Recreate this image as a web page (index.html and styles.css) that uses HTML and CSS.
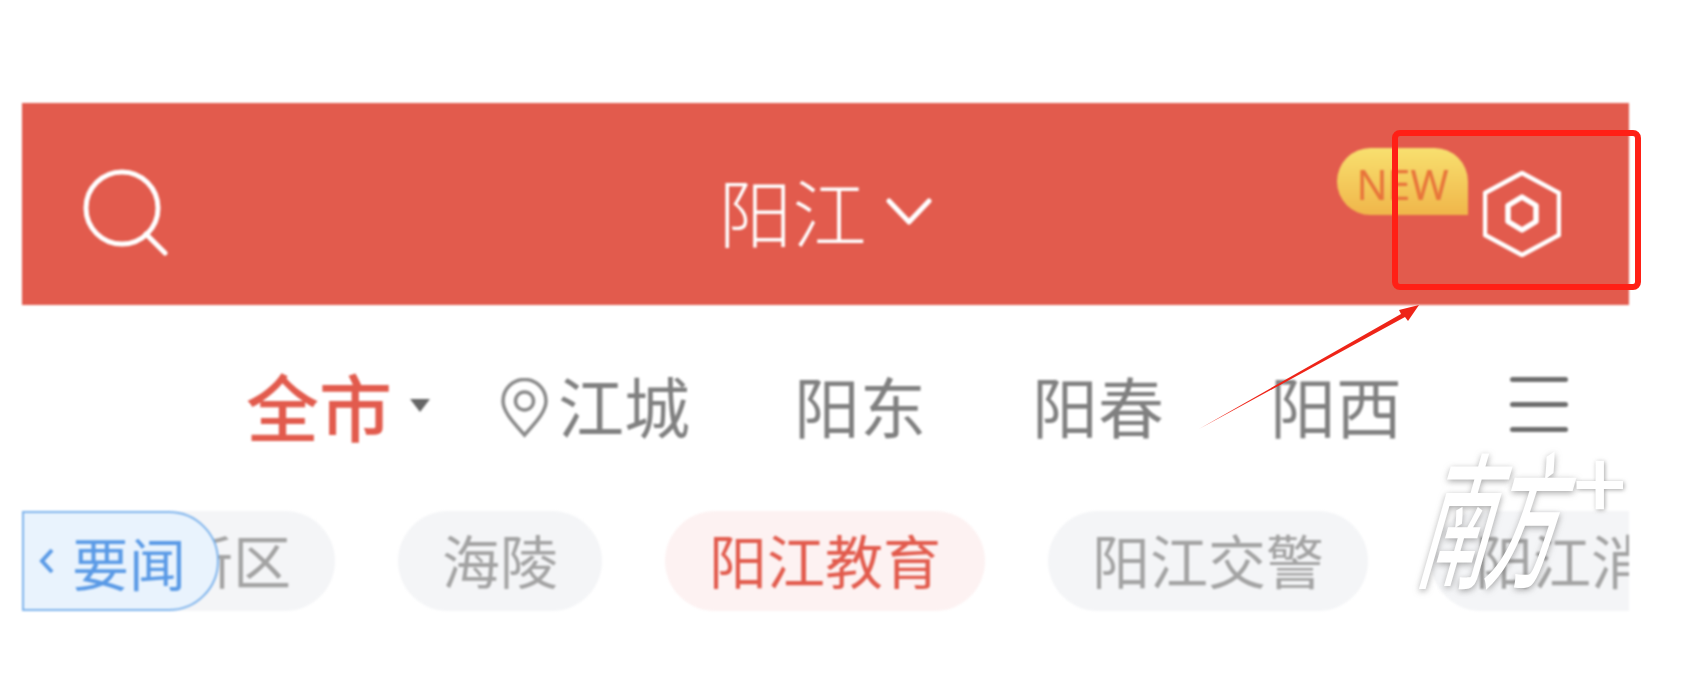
FILE: index.html
```html
<!DOCTYPE html>
<html lang="zh-CN">
<head>
<meta charset="utf-8">
<title>阳江</title>
<link rel="stylesheet" href="styles.css">
</head>
<body>
<main class="page">
  <header class="topbar">
    <svg class="search-icon" viewBox="0 0 90 96" aria-hidden="true">
      <circle cx="40" cy="48" r="36"/>
      <path d="M64 74 L83 93"/>
    </svg>
    <div class="city">阳江<svg class="city-arrow" viewBox="0 0 46 30" aria-hidden="true"><path d="M3 4 L23 25 L43 4"/></svg></div>
    <div class="tools">
      <span class="new-badge">NEW</span>
      <svg class="hex-icon" viewBox="0 0 78 86" aria-hidden="true">
        <path d="M39 2 L76 22 L76 64 L39 84 L2 64 L2 22 Z"/>
        <path class="hex-inner" d="M39 26 L53 34.500 L53 50.500 L39 59 L25 50.500 L25 34.500 Z"/>
      </svg>
    </div>
  </header>

  <nav class="areas">
    <span class="area area-current">全市</span>
    <span class="caret"></span>
    <svg class="pin-icon" viewBox="0 0 49 60" aria-hidden="true">
      <path d="M24.500 57 C14 45 3 34 3 23 A21.500 21.500 0 0 1 46 23 C46 34 35 45 24.500 57 Z"/>
      <circle cx="24.500" cy="23" r="9"/>
    </svg>
    <span class="area area-pinned">江城</span>
    <span class="area">阳东</span>
    <span class="area">阳春</span>
    <span class="area">阳西</span>
    <span class="menu"><i></i><i></i><i></i></span>
  </nav>

  <div class="chips">
    <span class="chip chip-first">新区</span>
    <span class="chip">海陵</span>
    <span class="chip chip-active">阳江教育</span>
    <span class="chip">阳江交警</span>
    <span class="chip">阳江消防</span>
    <span class="back-tab"><svg class="back-arrow" viewBox="0 0 16 28" aria-hidden="true"><path d="M13 3 L3 14 L13 25"/></svg>要闻</span>
  </div>
</main>

<div class="watermark"><span class="wm-text">南方</span><span class="wm-plus">+</span></div>

<div class="callout"></div>
<svg class="arrow" viewBox="0 0 1705 675" aria-hidden="true">
  <path d="M1199 429 L1401 314 L1399 310 L1419 305 L1408 321 L1405 317 Z"/>
</svg>
</body>
</html>
```
FILE: styles.css
```css
* {
  box-sizing: border-box;
}

html,
body {
  margin: 0;
  height: 675px;
  overflow: hidden;
  background: #fff;
}

body {
  position: relative;
  font-family: "Noto Sans CJK SC", "Noto Sans", sans-serif;
}

.page {
  width: 1607px;
  margin: 103px 0 0 22px;
  filter: blur(0.9px);
}

/* top bar */
.topbar {
  display: grid;
  grid-template-columns: 1fr auto 1fr;
  align-items: center;
  height: 202px;
  padding: 0 68px 0 60px;
  background: #e25b4d;
  color: #fff;
}

.search-icon {
  width: 90px;
  height: 96px;
  margin-top: 8px;
  fill: none;
  stroke: #fff;
  stroke-width: 5;
  stroke-linecap: round;
}

.city {
  display: flex;
  align-items: center;
  gap: 19px;
  margin-top: 12px;
  padding-left: 7px;
  font-size: 74px;
  font-weight: 300;
  line-height: 1;
}

.city-arrow {
  width: 46px;
  height: 30px;
  margin-top: 4px;
  fill: none;
  stroke: #fff;
  stroke-width: 5;
  stroke-linecap: round;
  stroke-linejoin: round;
}

.tools {
  display: flex;
  align-items: flex-start;
  justify-content: flex-end;
  gap: 15px;
  align-self: start;
  padding-top: 45px;
}

.new-badge {
  width: 131px;
  height: 67px;
  padding-top: 4px;
  border-radius: 34px 34px 0 34px;
  background: linear-gradient(#f8e06f, #f0b64a);
  color: #e8743a;
  font-family: "Noto Sans", sans-serif;
  font-size: 41px;
  line-height: 64px;
  text-align: center;
}

.hex-icon {
  width: 78px;
  height: 86px;
  margin-top: 23px;
  fill: none;
  stroke: #fff;
  stroke-width: 4.500;
  stroke-linejoin: round;
}

.hex-inner {
  stroke-width: 5.500;
}

/* area tabs */
.areas {
  display: flex;
  align-items: center;
  height: 206px;
  padding-left: 224px;
  padding-bottom: 8px;
  color: #808080;
  font-size: 66px;
  line-height: 1;
}

.area {
  margin-right: 106px;
}

.area-pinned {
  margin-right: 104px;
}

.area-current {
  margin-right: 18px;
  color: #e25b4d;
  font-size: 73px;
  font-weight: 500;
}

.caret {
  width: 0;
  height: 0;
  margin-top: 2px;
  border-left: 10px solid transparent;
  border-right: 10px solid transparent;
  border-top: 13px solid #666;
}

.pin-icon {
  width: 49px;
  height: 60px;
  margin: 8px 9px 0 70px;
  fill: none;
  stroke: #8a8a8a;
  stroke-width: 3.500;
}

.menu {
  display: flex;
  flex-direction: column;
  gap: 20px;
  width: 58px;
  margin-left: 2px;
}

.menu i {
  height: 5px;
  border-radius: 3px;
  background: #6e6e6e;
}

/* chips */
.chips {
  position: relative;
  display: flex;
  gap: 63px;
  height: 100px;
  overflow: hidden;
}

.chip {
  flex: none;
  height: 100px;
  padding: 0 44px;
  border-radius: 50px;
  background: #f4f5f7;
  color: #a3a3a3;
  font-size: 58px;
  line-height: 96px;
}

.chip-first {
  margin-left: 109px;
}

.chip-active {
  background: #fdf2f2;
  color: #e25b4d;
}

.back-tab {
  position: absolute;
  top: 0;
  left: 0;
  display: flex;
  align-items: center;
  gap: 17px;
  width: 197px;
  height: 100px;
  padding-left: 15px;
  border: 2px solid #7db3ec;
  border-radius: 0 50px 50px 0;
  background: #e9f3fd;
  color: #5a9ae6;
  font-size: 57px;
  line-height: 1;
}

.back-arrow {
  width: 16px;
  height: 30px;
  flex: none;
  fill: none;
  stroke: #5a9ae6;
  stroke-width: 4;
}

/* overlays on top of the screenshot */
.watermark {
  position: absolute;
  top: 439px;
  left: 1417px;
  width: 210px;
  height: 150px;
  color: #fff;
  text-shadow: 1px 1px 4px rgba(110, 110, 110, 0.6);
  filter: blur(0.5px);
}

.wm-text {
  display: block;
  width: 170px;
  padding-left: 16px;
  font-size: 70px;
  font-weight: 500;
  line-height: 150px;
  letter-spacing: -3px;
  white-space: nowrap;
  transform: skewX(-16deg) scaleY(2.1);
}

.wm-plus {
  position: absolute;
  top: -10px;
  left: 156px;
  font-size: 94px;
  font-weight: 500;
  line-height: 100px;
}

.callout {
  position: absolute;
  top: 130px;
  left: 1392px;
  width: 249px;
  height: 160px;
  border: 6px solid #ff2016;
  border-radius: 8px;
}

.arrow {
  position: absolute;
  top: 0;
  left: 0;
  width: 1705px;
  height: 675px;
  fill: #ee2418;
}
```
